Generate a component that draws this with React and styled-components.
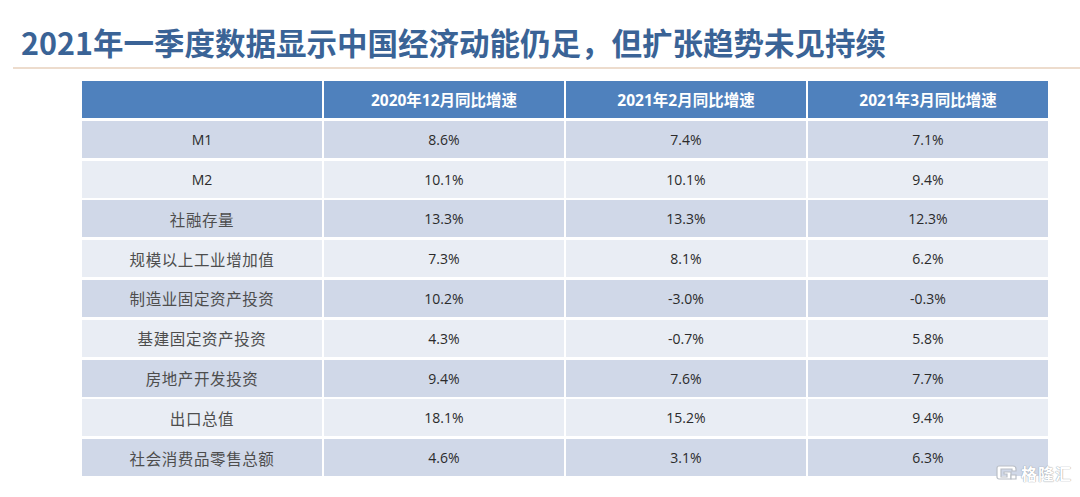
import React from 'react';
import styled, { createGlobalStyle } from 'styled-components';

const rows = [
  { label: 'M1', latin: true, values: ['8.6%', '7.4%', '7.1%'] },
  { label: 'M2', latin: true, values: ['10.1%', '10.1%', '9.4%'] },
  { label: '社融存量', values: ['13.3%', '13.3%', '12.3%'] },
  { label: '规模以上工业增加值', values: ['7.3%', '8.1%', '6.2%'] },
  { label: '制造业固定资产投资', values: ['10.2%', '-3.0%', '-0.3%'] },
  { label: '基建固定资产投资', values: ['4.3%', '-0.7%', '5.8%'] },
  { label: '房地产开发投资', values: ['9.4%', '7.6%', '7.7%'] },
  { label: '出口总值', values: ['18.1%', '15.2%', '9.4%'] },
  { label: '社会消费品零售总额', values: ['4.6%', '3.1%', '6.3%'] },
];

const headers = ['', '2020年12月同比增速', '2021年2月同比增速', '2021年3月同比增速'];

export default function App() {
  return (
    <Page>
      <GlobalStyle />
      <Title>2021年一季度数据显示中国经济动能仍足，但扩张趋势未见持续</Title>
      <Divider />
      <Table>
        {headers.map((h, i) => (
          <HeadCell key={i}>{h}</HeadCell>
        ))}
        {rows.map((row, r) => (
          <React.Fragment key={row.label}>
            <LabelCell $odd={r % 2 === 0} $latin={row.latin}>{row.label}</LabelCell>
            {row.values.map((v, c) => (
              <ValueCell key={c} $odd={r % 2 === 0}>{v}</ValueCell>
            ))}
          </React.Fragment>
        ))}
      </Table>
      <Watermark>
        <svg width="22" height="18" viewBox="0 0 22 18">
          <path
            d="M3 2h14a3 3 0 0 1 3 3v2h-4V5H5v8h6v-3h-3V8h7v7H3a2 2 0 0 1-2-2V4a2 2 0 0 1 2-2z"
            fill="#fff"
            stroke="#b9bec6"
            strokeWidth="1.2"
          />
          <path d="M15 11h5v4h-5z" fill="#fff" stroke="#b9bec6" strokeWidth="1.2" />
        </svg>
        <span>格隆汇</span>
      </Watermark>
    </Page>
  );
}

const GlobalStyle = createGlobalStyle`
  html, body {
    margin: 0;
    padding: 0;
    background: #ffffff;
  }
`;

const Page = styled.div`
  position: relative;
  width: 1080px;
  height: 497px;
  overflow: hidden;
  background: #ffffff;
  font-family: "Noto Sans CJK SC", sans-serif;
`;

const Title = styled.h1`
  margin: 0;
  padding: 27px 0 0 21px;
  font-size: 30.5px;
  line-height: 31px;
  font-weight: 700;
  color: #3a6396;
  font-family: "Noto Sans CJK SC", sans-serif;
  white-space: nowrap;
`;

const Divider = styled.div`
  margin: 9px 0 0 13px;
  height: 2px;
  background: #eddccd;
`;

const Table = styled.div`
  display: grid;
  grid-template-columns: repeat(4, 240px);
  grid-auto-rows: 37px;
  column-gap: 2px;
  row-gap: 2.8px;
  margin: 12px 0 0 82px;
  width: 966px;
`;

const Cell = styled.div`
  display: flex;
  align-items: center;
  justify-content: center;
  white-space: nowrap;
`;

const HeadCell = styled(Cell)`
  background: #4f81bd;
  color: #ffffff;
  font-size: 15.5px;
  font-weight: 700;
  font-family: "Open Sans", "Noto Sans CJK SC", sans-serif;
`;

const ValueCell = styled(Cell)`
  background: ${p => (p.$odd ? '#d0d8e8' : '#e9edf4')};
  color: #2b2b2b;
  font-size: 14px;
  font-family: "Open Sans", "Noto Sans CJK SC", sans-serif;
`;

const LabelCell = styled(Cell)`
  background: ${p => (p.$odd ? '#d0d8e8' : '#e9edf4')};
  color: ${p => (p.$latin ? '#2b2b2b' : '#4d4d4d')};
  font-size: ${p => (p.$latin ? '14px' : '15.5px')};
  letter-spacing: ${p => (p.$latin ? '0' : '0.6px')};
  font-family: ${p =>
    p.$latin ? '"Open Sans", sans-serif' : '"Noto Sans CJK SC", serif'};
`;

const Watermark = styled.div`
  position: absolute;
  right: 8px;
  bottom: 12px;
  display: flex;
  align-items: center;
  gap: 3px;
  span {
    font-family: "Noto Sans CJK SC", sans-serif;
    font-size: 16px;
    font-weight: 700;
    color: #ffffff;
    letter-spacing: 1px;
    text-shadow: 0 0 1px #9aa0a8, 0 0 1px #9aa0a8;
  }
`;
